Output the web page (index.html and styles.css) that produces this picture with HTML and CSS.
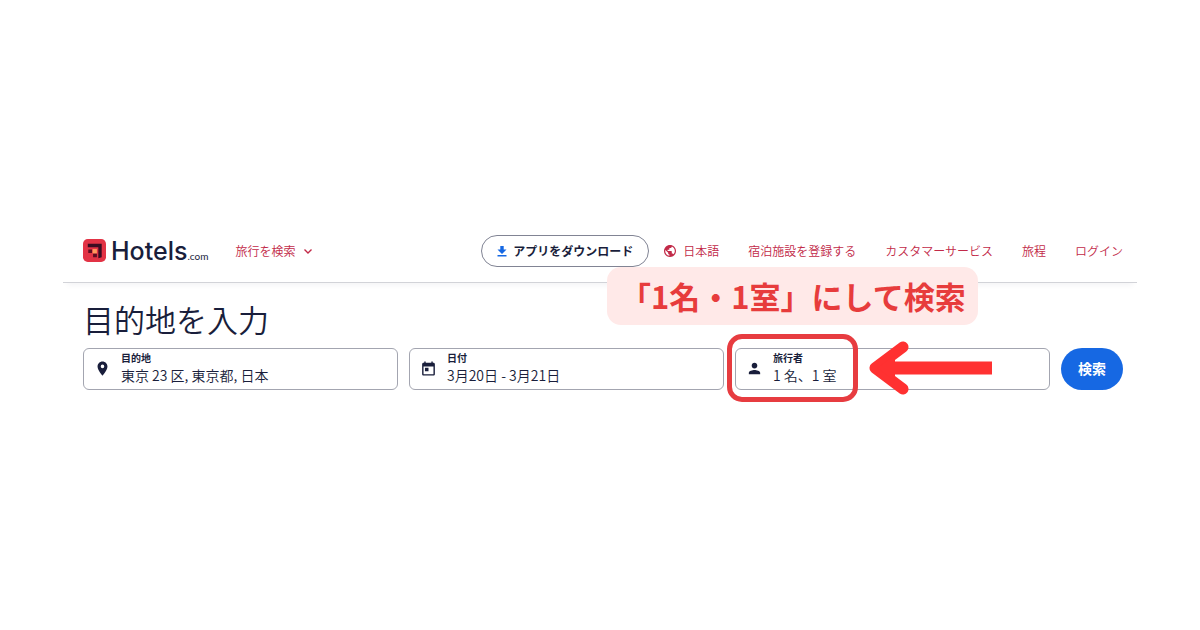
FILE: index.html
```html
<!DOCTYPE html>
<html lang="ja">
<head>
    <meta charset="UTF-8">
    <meta name="viewport" content="width=device-width, initial-scale=1.0">
    <title>Hotels.com</title>
    <link rel="stylesheet" href="styles.css">
</head>
<body>

    <div class="page">
        <header class="header">
            <a class="logo" href="#">
                <svg class="logo-mark" viewBox="0 0 24 24" aria-hidden="true">
                    <rect width="24" height="24" rx="5" fill="#e23345"/>
                    <path d="M5 5h14.500v14l-3.500 1V8.500H5z" fill="#3a0d22"/>
                    <path d="M5.500 11h4v3.500h-4zM10.500 15h4v4h-4z" fill="#5d0d22"/>
                    <path d="M10 10.500h4.500V15H10z" fill="#ff9b5c"/>
                </svg>
                <span class="logo-name">Hotels</span><span class="logo-com">.com</span>
            </a>
            <button class="menu-btn" type="button">
                旅行を検索
                <svg width="10" height="10" viewBox="0 0 10 10" aria-hidden="true"><path d="M1.500 3.500L5 7l3.500-3.500" fill="none" stroke="#c22a48" stroke-width="1.400"/></svg>
            </button>

            <nav class="nav">
                <button class="app-btn" type="button">
                    <svg width="10" height="12" viewBox="0 0 10 12" aria-hidden="true"><path d="M3.300 1h3.400v3.500H9.500L5 9 .5 4.500h2.800zM.5 10h9v1.500h-9z" fill="#1668e3"/></svg>
                    アプリをダウンロード
                </button>
                <a class="lang" href="#">
                    <svg width="12" height="12" viewBox="2 2 20 20" aria-hidden="true"><path d="M12 2C6.480 2 2 6.480 2 12s4.480 10 10 10 10-4.480 10-10S17.520 2 12 2zm-1 17.930c-3.950-.49-7-3.850-7-7.930 0-.62.080-1.210.210-1.790L9 15v1c0 1.100.9 2 2 2v1.930zm6.900-2.540c-.26-.81-1-1.390-1.900-1.390h-1v-3c0-.55-.45-1-1-1H8v-2h2c.55 0 1-.45 1-1V7h2c1.100 0 2-.9 2-2v-.41c2.930 1.190 5 4.060 5 7.410 0 2.080-.8 3.970-2.100 5.390z" fill="#c22a48"/></svg>
                    日本語
                </a>
                <a href="#">宿泊施設を登録する</a>
                <a href="#">カスタマーサービス</a>
                <a href="#">旅程</a>
                <a href="#">ログイン</a>
            </nav>
        </header>

        <main class="main">
            <h1>目的地を入力</h1>

            <form class="search">
                <div class="field">
                    <div class="box">
                        <svg class="icon" viewBox="0 0 24 24" aria-hidden="true"><path d="M12 2C8.130 2 5 5.130 5 9c0 5.250 7 13 7 13s7-7.750 7-13c0-3.870-3.130-7-7-7zm0 9.500a2.500 2.500 0 0 1 0-5 2.500 2.500 0 0 1 0 5z"/></svg>
                        <div class="text">
                            <label for="place">目的地</label>
                            <input type="text" id="place" value="東京 23 区, 東京都, 日本">
                        </div>
                    </div>
                </div>

                <div class="field">
                    <div class="box">
                        <svg class="icon" viewBox="0 0 24 24" aria-hidden="true"><path d="M19 4h-1V2h-2v2H8V2H6v2H5c-1.100 0-2 .9-2 2v14c0 1.100.9 2 2 2h14c1.100 0 2-.9 2-2V6c0-1.100-.9-2-2-2zm0 16H5V9h14v11zM7 11h5v5H7z"/></svg>
                        <div class="text">
                            <label for="dates">日付</label>
                            <input type="text" id="dates" value="3月20日 - 3月21日">
                        </div>
                    </div>
                </div>

                <div class="field">
                    <div class="box">
                        <svg class="icon" viewBox="0 0 24 24" aria-hidden="true"><path d="M12 12c2.210 0 4-1.790 4-4s-1.790-4-4-4-4 1.790-4 4 1.790 4 4 4zm0 2c-2.670 0-8 1.340-8 4v2h16v-2c0-2.660-5.330-4-8-4z"/></svg>
                        <div class="text">
                            <label for="guests">旅行者</label>
                            <input type="text" id="guests" value="1 名、1 室">
                        </div>
                    </div>

                    <!-- 説明用の枠・矢印・吹き出し -->
                    <div class="mark"></div>
                    <svg class="arrow" width="124" height="54" viewBox="0 0 124 54" aria-hidden="true">
                        <path d="M8 27h115" fill="none" stroke="#ff3131" stroke-width="13"/>
                        <path d="M34 6L6 27l28 21" fill="none" stroke="#ff3131" stroke-width="11" stroke-linecap="round" stroke-linejoin="round"/>
                        <path d="M8 27L26 14v26z" fill="#ff3131"/>
                    </svg>
                    <p class="callout">「1名・1室」にして検索</p>
                </div>

                <button class="search-btn" type="button">検索</button>
            </form>
        </main>
    </div>

</body>
</html>
```
FILE: styles.css
```css
* {
    box-sizing: border-box;
}
body {
    margin: 0;
    background-color: #fff;
    color: #191e3b;
    font-family: "Noto Sans CJK JP", sans-serif;
    font-size: 12px;
}
button, input {
    font-family: inherit;
    color: inherit;
    margin: 0;
    padding: 0;
    border: none;
    background: none;
}
button {
    cursor: pointer;
}
a {
    color: #c22a48;
    text-decoration: none;
}
.page {
    min-height: 100vh;
    padding: 219px 63px 40px;
}
.header {
    display: flex;
    align-items: center;
    height: 64px;
    padding: 0 14px 0 20px;
    border-bottom: 1px solid #d2d3d8;
    box-shadow: 0 6px 6px -4px #f3f3f5;
}
.logo {
    display: flex;
    align-items: baseline;
    color: #191e3b;
    font-family: Lato, sans-serif;
}
.logo-mark {
    width: 23px;
    height: 23px;
    margin-right: 5px;
    align-self: center;
}
.logo-name {
    font-family: Inter, sans-serif;
    font-size: 25px;
    font-weight: 500;
    line-height: 30px;
}
.logo-com {
    font-size: 10px;
    font-weight: 400;
}
.menu-btn {
    display: flex;
    align-items: center;
    gap: 8px;
    margin-left: 27px;
    color: #c22a48;
    font-size: 12px;
    font-weight: 350;
}
.nav {
    display: flex;
    align-items: center;
    gap: 29px;
    margin-left: auto;
    font-weight: 350;
    white-space: nowrap;
}
.app-btn {
    display: flex;
    align-items: center;
    justify-content: center;
    gap: 6px;
    height: 32px;
    padding: 0 15px;
    margin-right: -14px;
    border: 1px solid #818494;
    border-radius: 16px;
    font-size: 12px;
    font-weight: 700;
}
.lang {
    display: flex;
    align-items: center;
    gap: 7px;
}
.main {
    padding: 14px 14px 0 20px;
}
h1 {
    margin: 0 0 7px;
    font-size: 31px;
    font-weight: 350;
    line-height: 44px;
}
.search {
    display: flex;
    gap: 11px;
}
.field {
    position: relative;
    flex: 1;
    min-width: 0;
}
.box {
    display: flex;
    align-items: center;
    gap: 10px;
    height: 42px;
    padding: 0 10px 2px;
    border: 1px solid #a3a5b0;
    border-radius: 6px;
}
.icon {
    flex: none;
    width: 17px;
    height: 17px;
    fill: #191e3b;
}
.text {
    flex: 1;
    min-width: 0;
}
.text label {
    display: block;
    font-size: 10px;
    font-weight: 700;
    line-height: 14px;
}
.text input {
    display: block;
    width: 100%;
    height: 20px;
    font-size: 14px;
    font-weight: 350;
}
.search-btn {
    width: 62px;
    height: 42px;
    padding-bottom: 2px;
    border-radius: 21px;
    background-color: #1668e3;
    color: #fff;
    font-size: 14px;
    font-weight: 700;
}
.mark {
    position: absolute;
    top: -14px;
    left: -8px;
    width: 131px;
    height: 68px;
    border: 5px solid #e73c40;
    border-radius: 15px;
    pointer-events: none;
}
.arrow {
    position: absolute;
    top: -7px;
    left: 134px;
}
.callout {
    position: absolute;
    top: -81px;
    left: -128px;
    margin: 0;
    padding: 0 12px 0 13px;
    border-radius: 14px;
    background-color: #ffe9e8;
    color: #e73c3c;
    font-size: 31px;
    font-weight: 700;
    line-height: 58px;
    white-space: nowrap;
}
```
